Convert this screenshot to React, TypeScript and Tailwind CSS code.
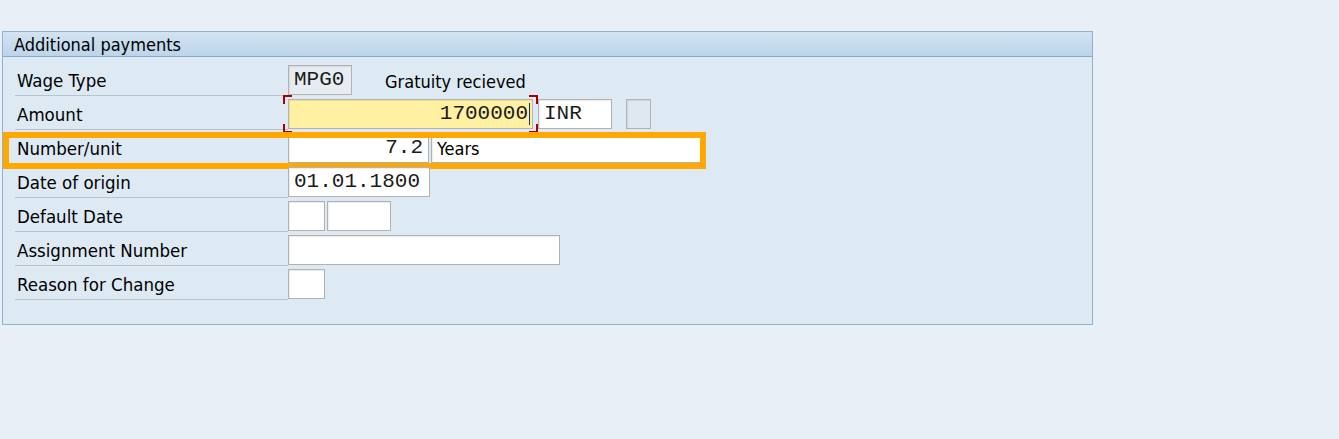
import type { ReactNode } from 'react';

const LABEL_FONT = { fontFamily: '"DejaVu Sans Condensed", "DejaVu Sans", Tahoma, sans-serif' };
const MONO_FONT = { fontFamily: '"Liberation Mono", "Courier New", monospace' };

interface RowProps {
  label: string;
  children?: ReactNode;
  highlight?: boolean;
}

function Row({ label, children, highlight }: RowProps) {
  return (
    <div className="relative flex h-[34px]">
      <div
        className="w-[273px] shrink-0 border-b border-[#b9c3cc] pl-[2px] pt-[8px] text-[18.5px] leading-[22px] text-black [font-stretch:condensed]"
        style={LABEL_FONT}
      >
        {label}
      </div>
      <div className="flex items-start gap-[2px] pt-[3px]">{children}</div>
      {/* highlight box drawn over the row */}
      {highlight && (
        <div className="pointer-events-none absolute top-[2px] bottom-[-5px] left-[-12px] w-[703px] border-[6px] border-[#ffa800]" />
      )}
    </div>
  );
}

interface FieldProps {
  w: string;
  bg?: string;
  right?: boolean;
  mono?: boolean;
  children?: ReactNode;
}

function Field({ w, bg = 'bg-white', right, mono = true, children }: FieldProps) {
  return (
    <div
      className={`${w} ${bg} flex h-[30px] items-center border border-[#b2b2b2] shadow-[inset_1px_1px_1px_rgba(0,0,0,0.08)] ${
        right ? 'justify-end pr-[5px]' : 'pl-[5px]'
      } ${mono ? 'text-[21px] text-[#1b1b1b]' : 'text-[18px] text-black [font-stretch:condensed]'}`}
      style={mono ? MONO_FONT : LABEL_FONT}
    >
      {children}
    </div>
  );
}

function Corner({ pos }: { pos: string }) {
  return <span className={`absolute h-[9px] w-[9px] border-[#a80000] ${pos}`} />;
}

export default function App() {
  return (
    <div className="min-h-[439px] w-full bg-[#e8eff7] pt-[31px] pl-[2px]">
      <div className="h-[294px] w-[1091px] border border-[#8db2d7] bg-[#dde9f3]">
        {/* Header */}
        <div
          className="flex h-[25px] items-center border-b border-[#8aaacb] bg-gradient-to-b from-[#d3e3f2] to-[#bcd4ea] pl-[11px] text-[18px] text-black [font-stretch:condensed]"
          style={LABEL_FONT}
        >
          Additional payments
        </div>

        <div className="pt-[5px] pl-[12px]">
          <Row label="Wage Type">
            <Field w="w-[64px]" bg="bg-[#e6ecf2]">MPG0</Field>
            <span
              className="ml-[31px] pt-[3px] text-[18px] text-black [font-stretch:condensed]"
              style={LABEL_FONT}
            >
              Gratuity recieved
            </span>
          </Row>

          <Row label="Amount">
            <div className="relative">
              <Corner pos="-left-[5px] -top-[4px] border-l-2 border-t-2" />
              <Corner pos="-right-[5px] -top-[4px] border-r-2 border-t-2" />
              <Corner pos="-left-[5px] -bottom-[4px] border-l-2 border-b-2" />
              <Corner pos="-right-[5px] -bottom-[4px] border-r-2 border-b-2" />
              <div
                className="flex h-[30px] w-[245px] items-center justify-end border border-[#b2b2b2] bg-[#fff0a2] pr-[2px] text-[21px] text-[#1b1b1b] shadow-[inset_1px_1px_1px_rgba(0,0,0,0.08)]"
                style={MONO_FONT}
              >
                1700000
                <span className="ml-[1px] h-[22px] w-px bg-[#1c2a6e]" />
              </div>
            </div>
            <div className="ml-[3px]">
              <Field w="w-[74px]">INR</Field>
            </div>
            <div className="ml-[12px]">
              <Field w="w-[25px]" bg="bg-[#dfe8f1]" />
            </div>
          </Row>

          <Row label="Number/unit" highlight>
            <Field w="w-[141px]" right>
              7.2
            </Field>
            <Field w="w-[272px]" mono={false}>
              Years
            </Field>
          </Row>

          <Row label="Date of origin">
            <Field w="w-[142px]">01.01.1800</Field>
          </Row>

          <Row label="Default Date">
            <Field w="w-[37px]" />
            <Field w="w-[64px]" />
          </Row>

          <Row label="Assignment Number">
            <Field w="w-[272px]" />
          </Row>

          <Row label="Reason for Change">
            <Field w="w-[37px]" />
          </Row>
        </div>
      </div>
    </div>
  );
}
